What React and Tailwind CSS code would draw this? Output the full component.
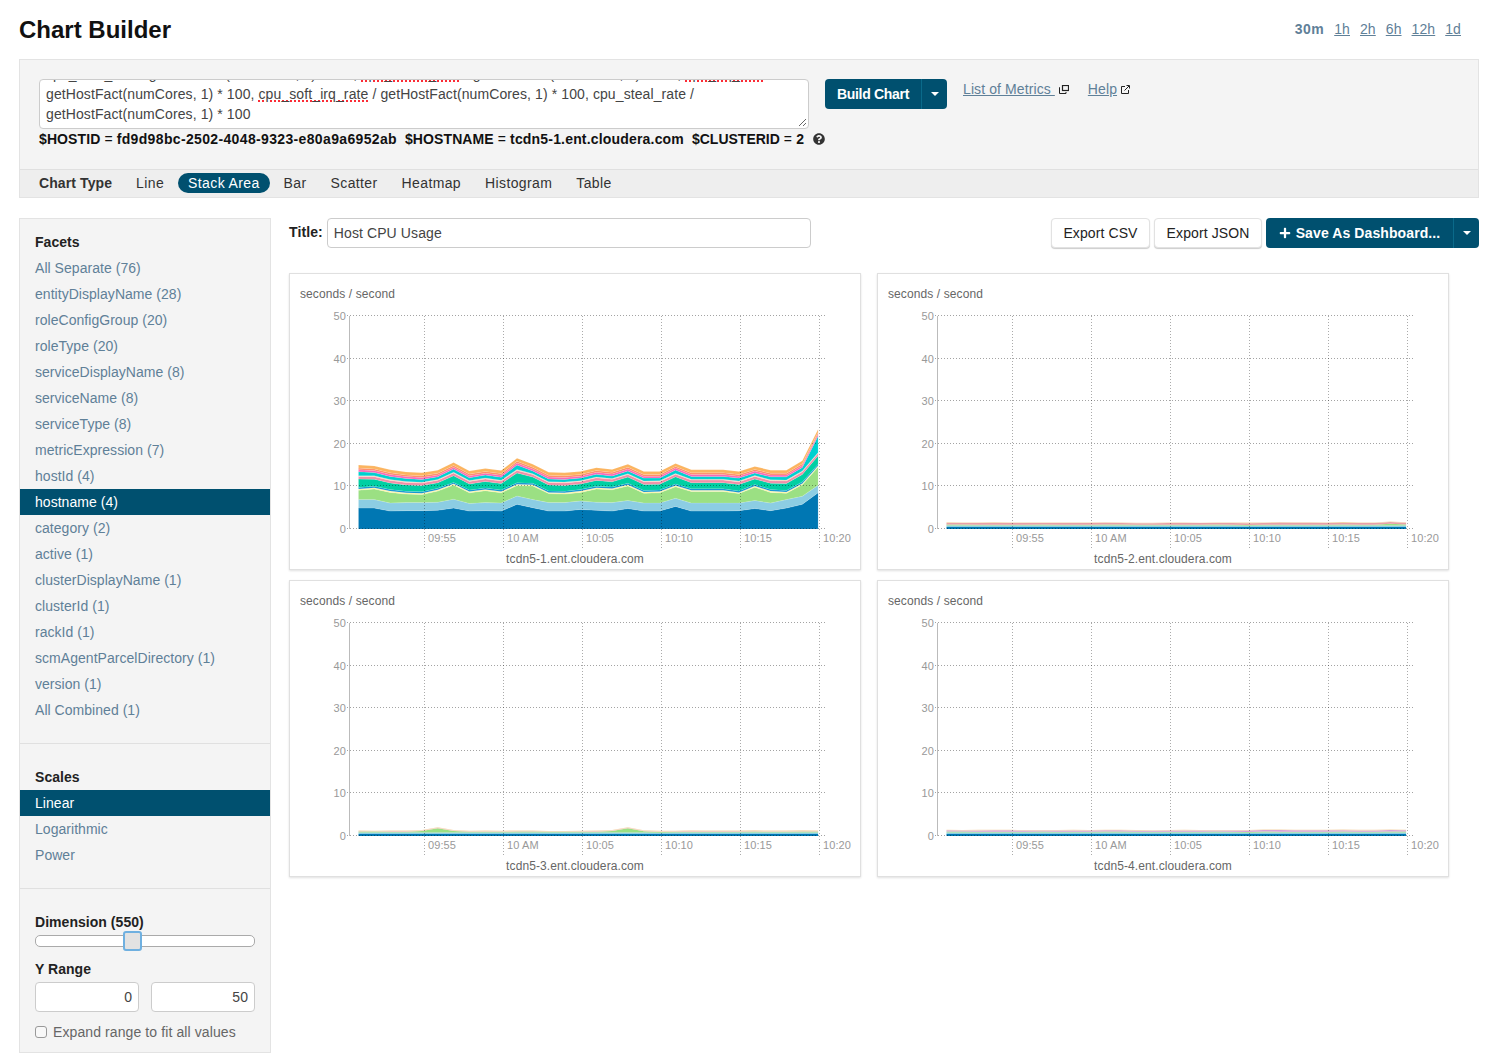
import { FaPlus, FaQuestionCircle } from "react-icons/fa"

const FONT = "font-['Liberation_Sans',Arial,sans-serif]"
const TIEMPOS = ["1h", "2h", "6h", "12h", "1d"]
const TIPOS = ["Line", "Stack Area", "Bar", "Scatter", "Heatmap", "Histogram", "Table"]
const FACETAS = [
  "All Separate (76)",
  "entityDisplayName (28)",
  "roleConfigGroup (20)",
  "roleType (20)",
  "serviceDisplayName (8)",
  "serviceName (8)",
  "serviceType (8)",
  "metricExpression (7)",
  "hostId (4)",
  "hostname (4)",
  "category (2)",
  "active (1)",
  "clusterDisplayName (1)",
  "clusterId (1)",
  "rackId (1)",
  "scmAgentParcelDirectory (1)",
  "version (1)",
  "All Combined (1)",
]
const ESCALAS = ["Linear", "Logarithmic", "Power"]

// valores leídos de la captura, uno por minuto
const AZUL = [4.9, 4.9, 4.2, 4.3, 4.3, 4.4, 4.9, 4.2, 4.3, 4.2, 5.8, 5.0, 4.2, 4.2, 4.6, 4.4, 4.2, 4.8, 4.2, 4.2, 5.3, 4.2, 4.2, 4.2, 4.3, 4.8, 4.3, 4.9, 5.8, 8.5]
const CELESTE = [6.9, 6.9, 6.1, 6.2, 6.2, 6.3, 7.0, 6.0, 6.2, 6.1, 7.75, 6.9, 6.2, 6.2, 6.6, 6.3, 6.2, 6.7, 6.1, 6.1, 7.2, 6.1, 6.1, 6.1, 6.1, 6.7, 6.1, 6.9, 7.7, 10.25]
const VERDE = [9.1, 9.4, 8.6, 8.2, 8.1, 8.9, 10.3, 8.5, 9.0, 8.5, 10.2, 10.1, 8.3, 8.2, 8.6, 9.4, 9.2, 10.1, 8.4, 8.5, 9.9, 8.8, 8.8, 8.8, 8.3, 9.8, 8.6, 8.4, 10.4, 14.55]
const TOTAL = [15, 14.8, 13.9, 13.4, 13.2, 13.8, 15.6, 13.6, 14.2, 13.7, 16.6, 15.2, 13.3, 13.2, 13.5, 14.4, 14.0, 15.2, 13.5, 13.5, 15.4, 13.9, 13.9, 13.9, 13.5, 14.7, 13.8, 13.8, 16.0, 23.4]
const ONDA = [0.6, 0.4, 0.2, 0.1, 0, 0.1, 0.3, 0, -0.1, 0.2, 0.4, 0.5, 0.1, -0.2, 0, 0.2, -0.1, 0.3, 0, -0.3, -0.1, 0.1, 0.2, 0.1, 0, 0.3, 0.1, 0.2, 0.9, 0.4]

const X0 = 68.5
const PASO = 15.85
const CERO = 224
const UNIDAD = 4.26

function capas1() {
  const capas = [
    { color: "#0077b3", tope: AZUL },
    { color: "#8ccde3", tope: CELESTE },
    { color: "#9be083", tope: VERDE },
  ]
  const partes = [
    ["#fdf3a6", 0.3, 0],
    ["#0a8fd0", 0.35, 0],
    ["#00cfa3", 0, 0.68],
    ["#ef8fa8", 0.6, 0],
    ["#f6d0b8", 0.2, 0],
    ["#00d0d0", 0, 0.32],
    ["#f768b8", 0.45, 0],
    ["#ff8a65", 0.4, 0],
    ["#fbb45f", 0.7, 0],
  ]
  const fijo = partes.reduce((s, p) => s + p[1], 0)
  let base = VERDE
  partes.forEach(([color, fija, parte]) => {
    const tope = base.map((b, i) => {
      const resto = TOTAL[i] - VERDE[i] - fijo
      // en el último punto casi todo el salto es cian
      const reparto = i === 29 && parte > 0 ? (parte > 0.5 ? 0.34 : 0.66) : parte
      return b + fija + resto * reparto
    })
    capas.push({ color, tope })
    base = tope
  })
  return capas
}

function capasChicas(bulto = {}, rosaColor = "#e8a0a8", arriba = 0.38) {
  const azul = ONDA.map(() => 0.5)
  const celeste = ONDA.map((o) => 0.8 + o * 0.05)
  const verde = ONDA.map((o, i) => 1.0 + o * 0.1 + (bulto[i] || 0))
  const rosa = verde.map((v, i) => v + arriba + ONDA[(i + 7) % 30] * 0.12)
  const tope = rosa.map((v, i) => v + 0.12 + ONDA[(i + 3) % 30] * 0.06)
  return [
    { color: "#0077b3", tope: azul },
    { color: "#8ccde3", tope: celeste },
    { color: "#9be083", tope: verde },
    { color: rosaColor, tope: rosa },
    { color: "#f3d3a8", tope: tope },
  ]
}

const GRAFICOS = [
  { host: "tcdn5-1.ent.cloudera.com", capas: capas1(), borde: "rgba(255,255,255,0.3)" },
  { host: "tcdn5-2.ent.cloudera.com", capas: capasChicas({ 28: 0.15 }) },
  { host: "tcdn5-3.ent.cloudera.com", capas: capasChicas({ 4: 0.15, 5: 0.8, 6: 0.15, 16: 0.2, 17: 0.8, 18: 0.1 }, "#f3c0b8", 0.1) },
  { host: "tcdn5-4.ent.cloudera.com", capas: capasChicas({ 20: 0.1 }, "#d9a0d8", 0.28) },
]

function puntos(tope, base) {
  const y = (v) => (CERO - v * UNIDAD).toFixed(1)
  const arriba = tope.map((v, i) => `${(X0 + i * PASO).toFixed(1)},${y(v)}`)
  const abajo = tope.map((_, i) => {
    const j = tope.length - 1 - i
    return `${(X0 + j * PASO).toFixed(1)},${y(base ? base[j] : 0)}`
  })
  return [...arriba, ...abajo].join(" ")
}

function Grafico({ host, capas, borde = "none" }) {
  const verticales = ["09:55", "10 AM", "10:05", "10:10", "10:15", "10:20"]
  return (
    <div className="h-[297px] w-[572px] border border-[#e0e0e0] bg-white pt-[10px] shadow-[0_1px_2px_rgba(0,0,0,0.12)]">
      <div className="pl-[10px] text-[12px] leading-[20px] text-[#666]">seconds / second</div>
      <svg width="570" height="245" className="mt-px block" style={{ fontFamily: "'Liberation Sans', Arial, sans-serif" }}>
        {capas.map((c, i) => (
          <polygon key={i} points={puntos(c.tope, i > 0 ? capas[i - 1].tope : null)} fill={c.color} stroke={borde} strokeWidth="0.4" />
        ))}
        {[0, 10, 20, 30, 40, 50].map((v) => {
          const y = Math.round(CERO - v * UNIDAD) - 0.5
          return (
            <g key={v}>
              <line x1="57" x2="535" y1={y} y2={y} stroke="rgba(0,0,0,0.36)" strokeDasharray="1 2" />
              <text x="56" y={y + 4} textAnchor="end" fontSize="11" fill="#999">
                {v}
              </text>
            </g>
          )
        })}
        {verticales.map((t, i) => {
          const x = 134.5 + i * 79
          return (
            <g key={t}>
              <line x1={x} x2={x} y1="11" y2="243" stroke="rgba(0,0,0,0.33)" strokeDasharray="1 2" />
              <text x={x + 3.5} y="237" fontSize="11" fill="#999">
                {t}
              </text>
            </g>
          )
        })}
        <line x1="59.5" x2="59.5" y1="11" y2="224" stroke="#bbb" />
      </svg>
      <div className="text-center text-[12px] leading-[18px] text-[#666]">{host}</div>
    </div>
  )
}

function Caret() {
  return <span className="h-0 w-0 border-x-[4px] border-t-[4px] border-x-transparent border-t-white" />
}

function BotonOscuro({ children, ancho, tracking }) {
  return (
    <div className={`flex h-[30px] ${ancho} rounded-[4px] bg-[#00506f] text-white`}>
      <div className={`flex flex-1 items-center justify-center border-r border-[#0a6a8a] text-[14px] font-bold ${tracking}`}>{children}</div>
      <div className="flex w-[25px] items-center justify-center">
        <Caret />
      </div>
    </div>
  )
}

function BotonBlanco({ children, ancho }) {
  return (
    <div className={`flex h-[30px] ${ancho} items-center justify-center rounded-[4px] border border-[#e2e2e2] bg-white text-[14px] text-[#222] shadow-[0_1px_1px_rgba(0,0,0,0.2)]`}>
      {children}
    </div>
  )
}

function IconoVentana() {
  return (
    <svg width="10" height="9" viewBox="0 0 10 9" className="shrink-0" fill="none" stroke="#222">
      <rect x="3.5" y="0.5" width="6" height="5" strokeWidth="1.2" />
      <path d="M1 2.5H.5V8.5H7V7" />
    </svg>
  )
}

function IconoExterno() {
  return (
    <svg width="9" height="9" viewBox="0 0 9 9" className="shrink-0" fill="none" stroke="#222">
      <path d="M4 1.5H.5V8.5H7.5V5" />
      <path d="M3.5 5.5L8 1M5.5 .5H8.5V3.5" />
    </svg>
  )
}

function Squiggle({ children }) {
  return <span className="underline decoration-red-500 decoration-dotted decoration-2 underline-offset-1">{children}</span>
}

function Fila({ texto, activo }) {
  return (
    <div className={`h-[26px] pl-[15px] leading-[26px] ${activo ? "bg-[#00506f] text-white" : "text-[#5f8098]"}`}>{texto}</div>
  )
}

function Lateral() {
  return (
    <aside className="h-[835px] w-[252px] shrink-0 border border-[#e3e3e3] bg-[#f4f4f4] text-[14px] tracking-[0.04px]">
      <div className="border-b border-[#e0e0e0] pb-[20px] pt-[10px]">
        <div className="pl-[15px] font-bold leading-[26px] text-[#222]">Facets</div>
        {FACETAS.map((f) => (
          <Fila key={f} texto={f} activo={f === "hostname (4)"} />
        ))}
      </div>
      <div className="border-b border-[#e0e0e0] pb-[20px] pt-[20px]">
        <div className="pl-[15px] font-bold leading-[26px] text-[#222]">Scales</div>
        {ESCALAS.map((e) => (
          <Fila key={e} texto={e} activo={e === "Linear"} />
        ))}
      </div>
      <div className="px-[15px] pt-[23px]">
        <div className="font-bold leading-[20px] text-[#222]">Dimension (550)</div>
        <div className="relative mt-[3px] h-[12px] rounded-[5px] border border-[#aaa] bg-white">
          <div className="absolute left-[87px] top-[-5px] h-[20px] w-[19px] rounded-[3px] border-2 border-[#6fb0e0] bg-[#e2e2e2]" />
        </div>
        <div className="mt-[12px] font-bold leading-[20px] text-[#222]">Y Range</div>
        <div className="mt-[3px] flex gap-[12px]">
          <div className="h-[30px] w-[104px] rounded-[4px] border border-[#ccc] bg-white pr-[6px] text-right leading-[28px] text-[#444]">0</div>
          <div className="h-[30px] w-[104px] rounded-[4px] border border-[#ccc] bg-white pr-[6px] text-right leading-[28px] text-[#444]">50</div>
        </div>
        <label className="mt-[10px] flex items-center gap-[6px] leading-[20px] tracking-[0.1px] text-[#666]">
          <input type="checkbox" className="h-[12px] w-[12px] appearance-none rounded-[3px] border border-[#999] bg-[#f8f8f8]" />
          Expand range to fit all values
        </label>
      </div>
    </aside>
  )
}

export default function App() {
  return (
    <div className={`h-[1064px] w-[1490px] overflow-hidden bg-white pl-[19px] pr-[11px] text-[14px] tracking-[0.1px] text-[#333] ${FONT}`}>
      <header className="flex h-[59px] items-center justify-between pr-[18px]">
        <h1 className="text-[24px] font-bold tracking-normal text-[#111]">Chart Builder</h1>
        <nav className="flex gap-[10px] text-[#5f8098]">
          <span className="font-bold tracking-[0.5px]">30m</span>
          {TIEMPOS.map((t) => (
            <a key={t} className="underline">
              {t}
            </a>
          ))}
        </nav>
      </header>

      <section className="h-[139px] border border-[#e3e3e3] bg-[#f4f4f4]">
        <div className="h-[109px] pl-[19px] pt-[19px]">
          <div className="flex items-start">
            <div className="relative h-[50px] w-[770px] overflow-hidden rounded-[4px] border border-[#ccc] bg-white pl-[6px] leading-[20px] text-[#444]">
              <div className="-mt-[16px] whitespace-nowrap">
                <div>
                  cpu_user_rate / getHostFact(numCores, 1) * 100, <Squiggle>cpu_iowait_rate</Squiggle> / getHostFact(numCores, 1) * 100, <Squiggle>cpu_irq_rate</Squiggle>
                </div>
                <div>
                  getHostFact(numCores, 1) * 100, <Squiggle>cpu_soft_irq_rate</Squiggle> / getHostFact(numCores, 1) * 100, cpu_steal_rate /
                </div>
                <div>getHostFact(numCores, 1) * 100</div>
              </div>
              <svg width="9" height="9" viewBox="0 0 9 9" className="absolute bottom-px right-px" stroke="#666">
                <path d="M1 8L8 1M5 8L8 5" />
              </svg>
            </div>
            <div className="ml-[16px]">
              <BotonOscuro ancho="w-[122px]" tracking="tracking-[-0.3px]">
                Build Chart
              </BotonOscuro>
            </div>
            <div className="ml-[16px] flex items-center gap-[4px] leading-[20px] text-[#5f8098]">
              <a className="whitespace-pre underline">List of Metrics </a>
              <IconoVentana />
            </div>
            <div className="ml-[19px] flex items-center gap-[4px] leading-[20px] text-[#5f8098]">
              <a className="underline">Help</a>
              <IconoExterno />
            </div>
          </div>
          <div className="flex h-[20px] items-center whitespace-pre leading-[20px] text-[#111]">
            <span>
              <b>$HOSTID</b> = <b className="tracking-[0.35px]">fd9d98bc-2502-4048-9323-e80a9a6952ab</b>
              {"  "}
              <b>$HOSTNAME</b> = <b className="tracking-[0.18px]">tcdn5-1.ent.cloudera.com</b>
              {"  "}
              <b className="tracking-normal">$CLUSTERID</b> = <b>2</b>
            </span>
            <FaQuestionCircle className="ml-[9px] text-[12px] text-[#333]" />
          </div>
        </div>
        <div className="flex h-[28px] items-start gap-[4px] border-t border-[#e0e0e0] bg-[#eee] pl-[19px] pt-[3px]">
          <span className="mr-[10px] font-bold leading-[20px]">Chart Type</span>
          {TIPOS.map((t) => (
            <span key={t} className={`rounded-full px-[10px] leading-[20px] tracking-[0.38px] ${t === "Stack Area" ? "bg-[#00506f] text-white" : "text-[#333]"}`}>
              {t}
            </span>
          ))}
        </div>
      </section>

      <div className="mt-[20px] flex gap-[18px]">
        <Lateral />
        <main className="flex-1">
          <div className="flex h-[30px] items-center">
            <label className="mb-[2px] mr-[4px] font-bold text-[#222]">Title:</label>
            <div className="h-[30px] w-[484px] rounded-[4px] border border-[#ccc] bg-white pl-[6px] leading-[28px] text-[#444]">Host CPU Usage</div>
            <div className="ml-auto flex gap-[4px]">
              <BotonBlanco ancho="w-[99px]">Export CSV</BotonBlanco>
              <BotonBlanco ancho="w-[108px]">Export JSON</BotonBlanco>
              <BotonOscuro ancho="w-[213px]" tracking="tracking-[0.1px]">
                <FaPlus className="mr-[5px] text-[12px]" />
                Save As Dashboard...
              </BotonOscuro>
            </div>
          </div>
          <div className="mt-[25px] grid w-[1160px] grid-cols-[572px_572px] gap-x-[16px] gap-y-[10px]">
            {GRAFICOS.map((g) => (
              <Grafico key={g.host} {...g} />
            ))}
          </div>
        </main>
      </div>
    </div>
  )
}
